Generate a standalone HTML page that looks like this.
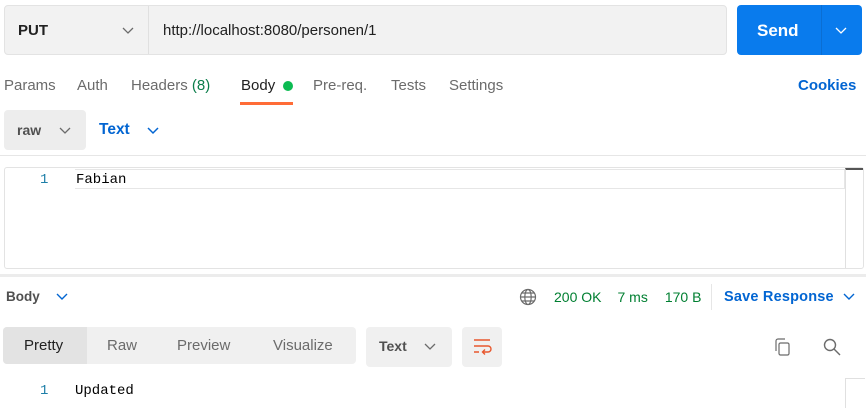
<!DOCTYPE html>
<html><head><style>
*{box-sizing:border-box;margin:0;padding:0}
body{width:866px;height:403px;background:#fff;font-family:"Liberation Sans",sans-serif;position:relative;overflow:hidden;color:#212121}
.a{position:absolute}
.mono{font-family:"Liberation Mono",monospace}
</style></head><body>
<div class="a" style="left:4px;top:5px;width:723px;height:50px;background:#f2f2f2;border:1px solid #e3e3e3;border-radius:4px"></div>
<div class="a" style="left:148px;top:6px;width:1px;height:48px;background:#e0e0e0"></div>
<div class="a" style="left:18px;top:22px;font-size:15px;font-weight:bold">PUT</div>
<svg class="a" style="left:122px;top:27px" width="12" height="8"><path d="M1 1l5 5 5-5" fill="none" stroke="#6b6b6b" stroke-width="1.3"/></svg>
<div class="a" style="left:163px;top:22px;font-size:15px;color:#212121">http://localhost:8080/personen/1</div>
<div class="a" style="left:737px;top:5px;width:125px;height:50px;background:#097bed;border-radius:4px"></div>
<div class="a" style="left:821px;top:5px;width:1px;height:50px;background:#0a6ed3"></div>
<div class="a" style="left:757px;top:21px;font-size:17px;font-weight:bold;color:#fff">Send</div>
<svg class="a" style="left:835px;top:27px" width="12" height="8"><path d="M1 1l5 5 5-5" fill="none" stroke="#fff" stroke-width="1.3"/></svg>
<div class="a" style="top:77px;left:4px;font-size:15px;color:#6b6b6b;white-space:nowrap">
<span class="a" style="left:0">Params</span><span class="a" style="left:73px">Auth</span><span class="a" style="left:127px">Headers <span style="color:#0a7d4a">(8)</span></span><span class="a" style="left:237px;color:#212121">Body</span><span class="a" style="left:309px">Pre-req.</span><span class="a" style="left:387px">Tests</span><span class="a" style="left:445px">Settings</span></div>
<div class="a" style="left:283px;top:81px;width:10px;height:10px;border-radius:50%;background:#0cbb52"></div>
<div class="a" style="left:240px;top:102px;width:53px;height:3px;background:#ff6c37"></div>
<div class="a" style="left:798px;top:77px;font-size:15px;font-weight:bold;color:#0265d2">Cookies</div>
<div class="a" style="left:4px;top:110px;width:82px;height:40px;background:#ededed;border-radius:4px"></div>
<div class="a" style="left:17px;top:122px;font-size:14px;color:#505050;font-weight:bold">raw</div>
<svg class="a" style="left:59px;top:127px" width="12" height="8"><path d="M1 1l5 5 5-5" fill="none" stroke="#6b6b6b" stroke-width="1.3"/></svg>
<div class="a" style="left:99px;top:121px;font-size:15.5px;font-weight:bold;color:#0265d2">Text</div>
<svg class="a" style="left:147px;top:127px" width="12" height="8"><path d="M1 1l5 5 5-5" fill="none" stroke="#0265d2" stroke-width="1.5"/></svg>
<div class="a" style="left:0;top:155px;width:866px;height:1px;background:#e6e6e6"></div>
<div class="a" style="left:4px;top:167px;width:860px;height:102px;border:1px solid #e3e3e3;border-radius:3px"></div>
<div class="a" style="left:75px;top:169px;width:770px;height:20px;border:1px solid #e6e6e6;border-left:none"></div>
<div class="a" style="left:845px;top:168px;width:18px;height:100px;border-left:1px solid #e0e0e0;border-top:2px solid #555"></div>
<div class="a mono" style="left:40px;top:172px;font-size:14px;color:#1e7fa8">1</div>
<div class="a mono" style="left:76px;top:172px;font-size:14px;color:#000">Fabian</div>
<div class="a" style="left:0;top:274px;width:866px;height:3px;background:#ececec"></div>
<div class="a" style="left:6px;top:289px;font-size:13.5px;font-weight:bold;color:#505050">Body</div>
<svg class="a" style="left:56px;top:293px" width="12" height="8"><path d="M1 1l5 5 5-5" fill="none" stroke="#0265d2" stroke-width="1.4"/></svg>
<svg class="a" style="left:519px;top:288px" width="18" height="18" viewBox="0 0 18 18" fill="none" stroke="#6b6b6b" stroke-width="1.2"><circle cx="9" cy="9" r="7.5"/><ellipse cx="9" cy="9" rx="3.2" ry="7.5"/><path d="M1.5 9h15M3 5h12M3 13h12"/></svg>
<div class="a" style="left:554px;top:289px;font-size:14px;color:#007f31;white-space:nowrap">200 OK<span style="margin-left:16px">7 ms</span><span style="margin-left:17px">170 B</span></div>
<div class="a" style="left:711px;top:284px;width:1px;height:26px;background:#e6e6e6"></div>
<div class="a" style="left:724px;top:289px;font-size:14.5px;font-weight:bold;color:#0265d2;letter-spacing:0.2px">Save Response</div>
<svg class="a" style="left:843px;top:293px" width="12" height="8"><path d="M1 1l5 5 5-5" fill="none" stroke="#0265d2" stroke-width="1.4"/></svg>
<div class="a" style="left:3px;top:327px;width:353px;height:37px;background:#f0f0f0;border-radius:4px"></div>
<div class="a" style="left:3px;top:327px;width:84px;height:37px;background:#e3e3e3;border-radius:4px 0 0 4px"></div>
<div class="a" style="top:337px;left:0;font-size:15px;color:#6b6b6b;white-space:nowrap"><span class="a" style="left:24px;color:#212121">Pretty</span><span class="a" style="left:107px">Raw</span><span class="a" style="left:177px">Preview</span><span class="a" style="left:273px">Visualize</span></div>
<div class="a" style="left:366px;top:327px;width:86px;height:40px;background:#f0f0f0;border-radius:4px"></div>
<div class="a" style="left:379px;top:338px;font-size:14px;font-weight:bold;color:#505050">Text</div>
<svg class="a" style="left:424px;top:343px" width="12" height="8"><path d="M1 1l5 5 5-5" fill="none" stroke="#6b6b6b" stroke-width="1.3"/></svg>
<div class="a" style="left:462px;top:327px;width:40px;height:40px;background:#f0f0f0;border-radius:4px"></div>
<svg class="a" style="left:472px;top:337px" width="20" height="20" viewBox="0 0 20 20" fill="none" stroke="#e8572d" stroke-width="1.4"><path d="M2 3h16M2 9h14a3 3 0 0 1 0 6h-5M2 15h5M13 12.5l-2.5 2.5 2.5 2.5"/></svg>
<svg class="a" style="left:773px;top:337px" width="20" height="20" viewBox="0 0 20 20" fill="none" stroke="#6b6b6b" stroke-width="1.2"><rect x="6" y="6" width="10" height="12" rx="1.5"/><path d="M3 14V4a2 2 0 0 1 2-2h7"/></svg>
<svg class="a" style="left:822px;top:337px" width="20" height="20" viewBox="0 0 20 20" fill="none" stroke="#6b6b6b" stroke-width="1.4"><circle cx="8" cy="8" r="5.5"/><path d="M12 12l6 6"/></svg>
<div class="a" style="left:845px;top:378px;width:20px;height:30px;border-left:1px solid #e0e0e0;border-top:1px solid #e0e0e0"></div>
<div class="a mono" style="left:40px;top:383px;font-size:14px;color:#1e7fa8">1</div>
<div class="a mono" style="left:75px;top:383px;font-size:14px;color:#000">Updated</div>
</body></html>
